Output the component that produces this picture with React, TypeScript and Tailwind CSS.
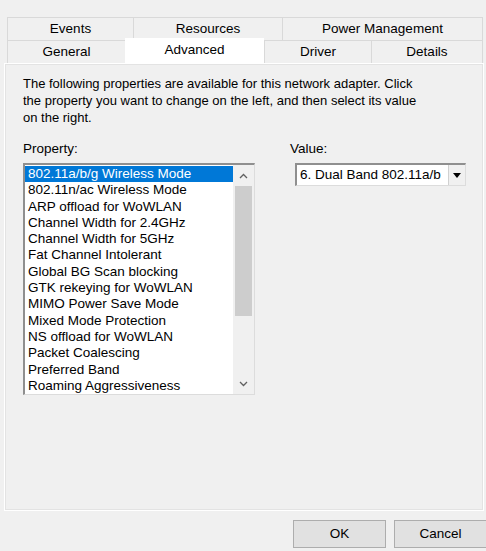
const properties = [
  "802.11a/b/g Wireless Mode",
  "802.11n/ac Wireless Mode",
  "ARP offload for WoWLAN",
  "Channel Width for 2.4GHz",
  "Channel Width for 5GHz",
  "Fat Channel Intolerant",
  "Global BG Scan blocking",
  "GTK rekeying for WoWLAN",
  "MIMO Power Save Mode",
  "Mixed Mode Protection",
  "NS offload for WoWLAN",
  "Packet Coalescing",
  "Preferred Band",
  "Roaming Aggressiveness",
];

function Tab({ label, className = "" }: { label: string; className?: string }) {
  return (
    <div className={`flex items-center justify-center border-t border-l border-[#d9d9d9] ${className}`}>
      {label}
    </div>
  );
}

export default function App() {
  return (
    <div
      className="w-[486px] h-[551px] bg-[#f0f0f0] text-black text-[13.5px] overflow-hidden"
      style={{ fontFamily: '"Liberation Sans", Arial, sans-serif' }}
    >
      <div className="pt-[17px] pl-[7px] w-[483px]">
        {/* Tabs row 1 */}
        <div className="flex h-[23px]">
          <Tab label="Events" className="w-[126px]" />
          <Tab label="Resources" className="w-[149px]" />
          <Tab label="Power Management" className="flex-1 border-r" />
        </div>
        {/* Tabs row 2 */}
        <div className="flex h-[23px] items-end">
          <Tab label="General" className="w-[118px] h-[23px]" />
          <div className="w-[139px] h-[25px] -mt-[2px] bg-white flex justify-center pt-[2px]">Advanced</div>
          <Tab label="Driver" className="w-[107px] h-[23px]" />
          <Tab label="Details" className="flex-1 h-[23px] border-r" />
        </div>
      </div>

      {/* Panel */}
      <div className="ml-[4px] w-[480px] h-[448px] border border-white">
        <div className="h-full border border-[#e3e3e3] pl-[17px] pr-4 pt-[10px]">
          <p className="leading-[17px] text-[13px] whitespace-nowrap">
            The following properties are available for this network adapter. Click
            <br />
            the property you want to change on the left, and then select its value
            <br />
            on the right.
          </p>

          <div className="flex mt-[14px]">
            <div className="w-[270px]">
              <div className="leading-[17px] mb-[6px]">Property:</div>
              <div className="w-[232px] h-[232px] bg-white border-t-2 border-l-2 border-t-[#8f8f8f] border-l-[#8f8f8f] border-r border-b border-r-[#dcdcdc] border-b-[#dcdcdc] flex">
                <ul className="flex-1 pt-px">
                  {properties.map((p, i) => (
                    <li
                      key={p}
                      className={`h-[16.3px] leading-[16px] pl-[3px] whitespace-nowrap ${
                        i === 0 ? "bg-[#0078d7] text-white" : ""
                      }`}
                    >
                      {p}
                    </li>
                  ))}
                </ul>
                <div className="w-[21px] bg-[#f0f0f0] flex flex-col items-center">
                  <div className="h-[21px] flex items-center justify-center">
                    <svg width="9" height="6" viewBox="0 0 9 6" fill="none" stroke="#606060" strokeWidth="1.3">
                      <path d="M1 5 4.5 1.5 8 5" />
                    </svg>
                  </div>
                  <div className="w-[17px] h-[130px] bg-[#cdcdcd]" />
                  <div className="flex-1" />
                  <div className="h-[21px] flex items-center justify-center">
                    <svg width="9" height="6" viewBox="0 0 9 6" fill="none" stroke="#606060" strokeWidth="1.3">
                      <path d="M1 1 4.5 4.5 8 1" />
                    </svg>
                  </div>
                </div>
              </div>
            </div>

            <div className="ml-[2px]">
              <div className="leading-[17px] mb-[6px]">Value:</div>
              <div className="ml-[5px] w-[171px] h-[23px] bg-white border-t-2 border-l-2 border-t-[#8f8f8f] border-l-[#8f8f8f] border-r border-b border-r-[#dcdcdc] border-b-[#dcdcdc] flex">
                <div className="flex-1 pl-[3px] leading-[20px] whitespace-nowrap overflow-hidden">6. Dual Band 802.11a/b</div>
                <div className="w-[17px] bg-[#f0f0f0] border-l border-[#d0d0d0] flex items-center justify-center">
                  <svg width="8" height="5" viewBox="0 0 8 5">
                    <path d="M0 0h8L4 5z" fill="#000" />
                  </svg>
                </div>
              </div>
            </div>
          </div>
        </div>
      </div>

      {/* Buttons */}
      <div className="flex justify-end gap-[8px] mt-[9px] -mr-[1px]">
        <button className="w-[93px] h-[28px] bg-[#e1e1e1] border border-[#adadad]">OK</button>
        <button className="w-[93px] h-[28px] bg-[#e1e1e1] border border-[#adadad]">Cancel</button>
      </div>
    </div>
  );
}
